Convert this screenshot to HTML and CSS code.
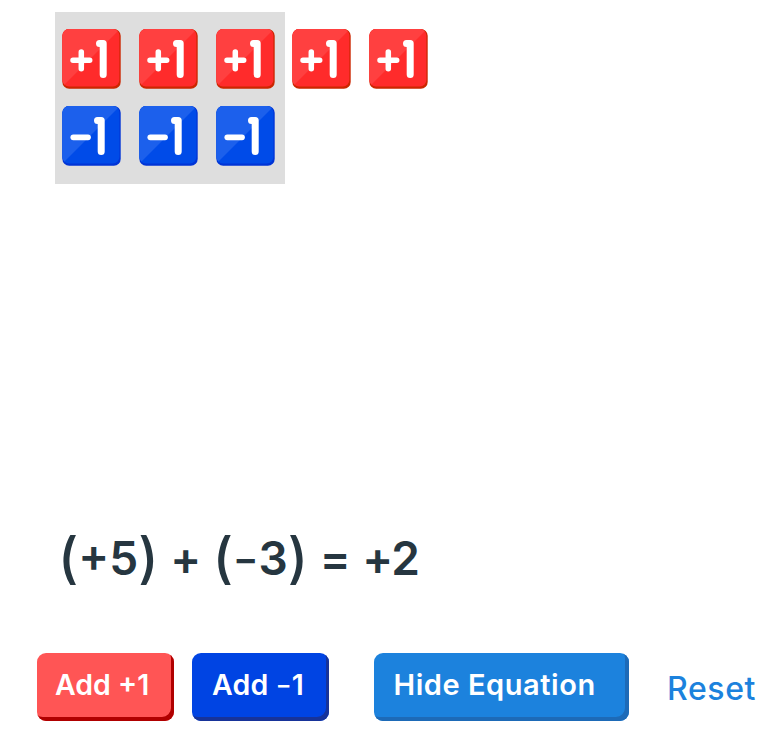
FILE: index.html
```html
<!DOCTYPE html>
<html lang="en">
<head>
<meta charset="utf-8">
<title>Integer Tiles</title>
<link rel="stylesheet" href="styles.css">
</head>
<body>
<svg class="defs" width="0" height="0" aria-hidden="true">
  <defs>
    <clipPath id="face"><rect x=".4" width="57" height="57.5" rx="6.5"/></clipPath>
    <symbol id="plus" viewBox="0 0 59 60">
      <rect x=".4" width="58.3" height="59.7" rx="6.8" fill="#cc2600"/>
      <g clip-path="url(#face)"><rect width="58" height="58" fill="#ff2b2b"/><path d="M0 0H58L0 58Z" fill="#ff4040"/></g>
      <path d="M11 31.3H27.7M19.3 23V39.7" stroke="#fff" stroke-width="5.5" stroke-linecap="round"/>
      <path d="M37.5 14.6H41.2V45.5" fill="none" stroke="#fff" stroke-width="7" stroke-linecap="round" stroke-linejoin="round"/>
    </symbol>
    <symbol id="minus" viewBox="0 0 59 60">
      <rect x=".4" width="58.3" height="59.7" rx="6.8" fill="#0034d6"/>
      <g clip-path="url(#face)"><rect width="58" height="58" fill="#004be8"/><path d="M0 0H58L0 58Z" fill="#1c60ec"/></g>
      <path d="M11.3 31.3H26" stroke="#fff" stroke-width="5.7" stroke-linecap="round"/>
      <path d="M35.5 14.6H39.2V45.5" fill="none" stroke="#fff" stroke-width="7" stroke-linecap="round" stroke-linejoin="round"/>
    </symbol>
  </defs>
</svg>
<main class="app">
  <section class="board">
    <div class="pairs">
      <svg class="tile"><use href="#plus"/></svg>
      <svg class="tile"><use href="#plus"/></svg>
      <svg class="tile"><use href="#plus"/></svg>
      <svg class="tile"><use href="#minus"/></svg>
      <svg class="tile"><use href="#minus"/></svg>
      <svg class="tile"><use href="#minus"/></svg>
    </div>
    <div class="extra">
      <svg class="tile"><use href="#plus"/></svg>
      <svg class="tile"><use href="#plus"/></svg>
    </div>
  </section>
  <p class="equation"><span><span class="paren">(</span>+5<span class="paren">)</span></span><span>+</span><span><span class="paren">(</span><span class="neg">−</span>3<span class="paren">)</span></span><span>=</span><span class="result">+2</span></p>
  <div class="controls">
    <button class="btn add">Add +1</button>
    <button class="btn sub">Add <span class="neg">−</span>1</button>
    <button class="btn hide">Hide Equation</button>
    <button class="reset">Reset</button>
  </div>
</main>
</body>
</html>
```
FILE: styles.css
```css
* { box-sizing: border-box; }
body { margin: 0; background: #fff; overflow: hidden; font-family: Inter, "Liberation Sans", sans-serif; }
.defs { display: block; }
.app { display: flex; flex-direction: column; width: 770px; height: 736px; padding-top: 12px; }
.board { display: flex; margin-left: 55px; height: 506px; align-items: flex-start; }
.pairs, .extra { display: grid; grid-auto-rows: 77px; padding-top: 17px; }
.pairs { grid-template-columns: repeat(3, 76.7px); width: 230px; height: 172px; background: #dedede; }
.extra { grid-template-columns: repeat(2, 76.7px); }
.tile { display: block; width: 59px; height: 60px; margin-left: 7.3px; }
.equation { display: flex; margin: 0; padding-left: 58px; height: 80px; line-height: 80px; font-size: 46px; font-weight: 600; color: #263640; white-space: nowrap; gap: 11.7px; }
.paren { font-size: 55px; font-weight: 500; line-height: 0; vertical-align: -2px; }
.neg { font-size: 0.82em; line-height: 0; vertical-align: 0.08em; }
.result { letter-spacing: -1px; }
.controls { display: flex; margin-top: 55.4px; padding-left: 37px; height: 68px; }
button { border: 0; padding: 0; font: inherit; white-space: nowrap; }
.btn { height: 68px; padding-bottom: 5px; border-radius: 9px; color: #fff; font-size: 28.5px; font-weight: 600; text-align: left; }
.add { width: 137px; padding-left: 18px; background: #ff5555; box-shadow: inset -3px -4px 0 #b00000; }
.sub { width: 137px; margin-left: 18px; padding-left: 20px; letter-spacing: 0.2px; background: #0044e3; box-shadow: inset -3px -4px 0 #173399; }
.hide { width: 255px; margin-left: 45px; padding-left: 19.5px; font-size: 29px; letter-spacing: 0.55px; background: #1c82dd; box-shadow: inset -4px -4px 0 #1d6ab7; }
.reset { margin-left: 38px; padding-top: 2px; background: none; color: #1c82dd; font-size: 32px; font-weight: 500; letter-spacing: 0.6px; }
```
